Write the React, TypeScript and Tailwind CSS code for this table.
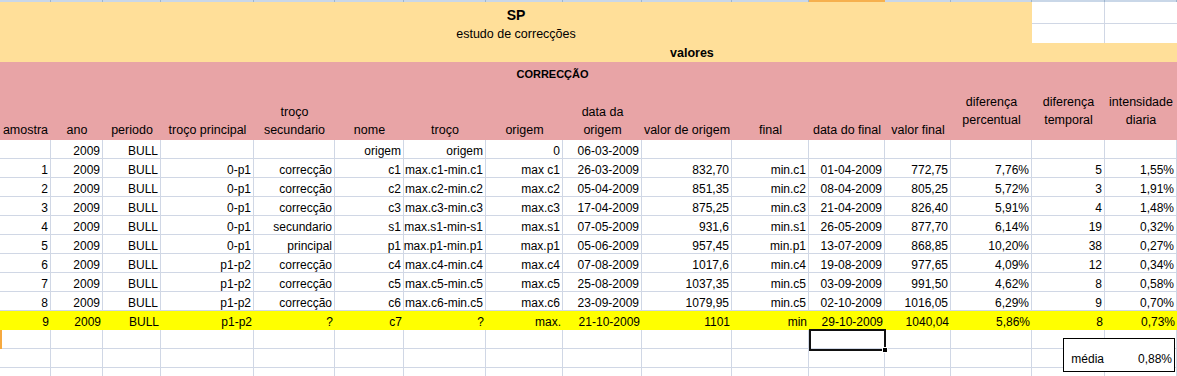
import React from "react";

const GRID =
  "grid grid-cols-[51px_52px_58px_93px_81px_69px_82px_77px_79px_90px_77px_76px_66px_81px_73px_72px]";

const headers: { lines: string[]; center?: boolean }[] = [
  { lines: ["amostra"] },
  { lines: ["ano"] },
  { lines: ["periodo"] },
  { lines: ["troço principal"] },
  { lines: ["troço", "secundario"] },
  { lines: ["nome"] },
  { lines: ["troço"] },
  { lines: ["origem"] },
  { lines: ["data da", "origem"] },
  { lines: ["valor de origem"] },
  { lines: ["final"] },
  { lines: ["data do final"] },
  { lines: ["valor final"] },
  { lines: ["diferença", "percentual"], center: true },
  { lines: ["diferença", "temporal"], center: true },
  { lines: ["intensidade", "diaria"], center: true },
];

const rows: string[][] = [
  ["", "2009", "BULL", "", "", "origem", "origem", "0", "06-03-2009", "", "", "", "", "", "", ""],
  ["1", "2009", "BULL", "0-p1", "correcção", "c1", "max.c1-min.c1", "max c1", "26-03-2009", "832,70", "min.c1", "01-04-2009", "772,75", "7,76%", "5", "1,55%"],
  ["2", "2009", "BULL", "0-p1", "correcção", "c2", "max.c2-min.c2", "max.c2", "05-04-2009", "851,35", "min.c2", "08-04-2009", "805,25", "5,72%", "3", "1,91%"],
  ["3", "2009", "BULL", "0-p1", "correcção", "c3", "max.c3-min.c3", "max.c3", "17-04-2009", "875,25", "min.c3", "21-04-2009", "826,40", "5,91%", "4", "1,48%"],
  ["4", "2009", "BULL", "0-p1", "secundario", "s1", "max.s1-min-s1", "max.s1", "07-05-2009", "931,6", "min.s1", "26-05-2009", "877,70", "6,14%", "19", "0,32%"],
  ["5", "2009", "BULL", "0-p1", "principal", "p1", "max.p1-min.p1", "max.p1", "05-06-2009", "957,45", "min.p1", "13-07-2009", "868,85", "10,20%", "38", "0,27%"],
  ["6", "2009", "BULL", "p1-p2", "correcção", "c4", "max.c4-min.c4", "max.c4", "07-08-2009", "1017,6", "min.c4", "19-08-2009", "977,65", "4,09%", "12", "0,34%"],
  ["7", "2009", "BULL", "p1-p2", "correcção", "c5", "max.c5-min.c5", "max.c5", "25-08-2009", "1037,35", "min.c5", "03-09-2009", "991,50", "4,62%", "8", "0,58%"],
  ["8", "2009", "BULL", "p1-p2", "correcção", "c6", "max.c6-min.c5", "max.c6", "23-09-2009", "1079,95", "min.c5", "02-10-2009", "1016,05", "6,29%", "9", "0,70%"],
];

const lastRow = ["9", "2009", "BULL", "p1-p2", "?", "c7", "?", "max.", "21-10-2009", "1101", "min", "29-10-2009", "1040,04", "5,86%", "8", "0,73%"];

const cols = Array.from({ length: 16 }, (_, i) => i);

function DataRow({ cells, yellow }: { cells: string[]; yellow?: boolean }) {
  return (
    <div className={`${GRID} h-[19px] text-[12px]`}>
      {cells.map((c, i) => (
        <div
          key={i}
          className={
            yellow
              ? "flex items-end justify-end whitespace-nowrap border-b border-transparent bg-[#ffff00] pr-[2px] leading-[14px]"
              : "flex items-end justify-end whitespace-nowrap border-r border-b border-[#d0d7e5] pr-[2px] leading-[14px]"
          }
        >
          {c}
        </div>
      ))}
    </div>
  );
}

export default function App() {
  return (
    <div
      className="relative h-[376px] w-[1177px] overflow-hidden bg-white text-[12.5px] text-black"
      style={{ fontFamily: '"Liberation Sans", Arial, sans-serif' }}
    >
      {/* column header edge */}
      <div className={`${GRID} h-[2px]`}>
        {cols.map((i) => (
          <div
            key={i}
            className={i === 11 ? "bg-[#f6b04e]" : "border-r border-[#9eb6ce] bg-[#c9d7e8]"}
          />
        ))}
      </div>

      {/* yellow title area */}
      <div className={`${GRID} h-[22px]`}>
        <div className="col-span-14 flex items-end justify-center bg-[#ffdf99] pb-[1px] text-[14px] font-bold leading-[16px]">
          SP
        </div>
        <div className="border-r border-b border-[#d0d7e5]" />
        <div className="border-b border-[#d0d7e5]" />
      </div>
      <div className={`${GRID} h-[19px]`}>
        <div className="col-span-14 flex items-center justify-center bg-[#ffdf99] leading-[14px]">
          estudo de correcções
        </div>
        <div className="border-r border-[#d0d7e5]" />
        <div />
      </div>
      <div className="flex h-[19px] items-center bg-[#ffdf99] pl-[670px] font-bold leading-[14px]">
        valores
      </div>

      {/* pink header */}
      <div className={`${GRID} h-[20px] bg-[#e8a4a6]`}>
        <div className="col-span-15 flex items-center justify-center pt-[3px] text-[11px] font-bold leading-[14px]">
          CORRECÇÃO
        </div>
        <div />
      </div>
      <div className={`${GRID} h-[58px] bg-[#e8a4a6]`}>
        {headers.map((h, i) => (
          <div
            key={i}
            className={`flex flex-col items-center whitespace-nowrap text-center leading-[18px] ${
              h.center ? "justify-center" : "justify-end pb-[1px]"
            }`}
          >
            {h.lines.map((l, j) => (
              <span key={j}>{l}</span>
            ))}
          </div>
        ))}
      </div>

      {/* data */}
      {rows.map((r, i) => (
        <DataRow key={i} cells={r} />
      ))}
      <DataRow cells={lastRow} yellow />

      {/* empty rows */}
      <div className={`${GRID} h-[19px]`}>
        {cols.map((i) => (
          <div key={i} className="relative border-r border-b border-[#d0d7e5]">
            {i === 0 && <div className="absolute left-0 top-0 h-[19px] w-[2px] bg-[#f6a940]" />}
            {i === 11 && (
              <div className="absolute -top-[1px] left-0 z-10 h-[22px] w-[77px] border-2 border-[#111]">
                <div className="absolute -bottom-[4px] -right-[4px] h-[6px] w-[6px] border border-white bg-black" />
              </div>
            )}
          </div>
        ))}
      </div>
      <div className={`${GRID} h-[19px]`}>
        {cols.map((i) => (
          <div key={i} className="border-r border-b border-[#d0d7e5]" />
        ))}
      </div>
      <div className={`${GRID} h-[19px]`}>
        {cols.map((i) => (
          <div key={i} className="border-r border-b border-[#d0d7e5]" />
        ))}
      </div>

      {/* média text box */}
      <div className="absolute left-[1063px] top-[338px] flex h-[34px] w-[112px] items-end border border-black bg-white pb-[5px] text-[12px] leading-[14px]">
        <div className="w-[41px] pr-[1px] text-right">média</div>
        <div className="flex-1 pr-[2px] text-right">0,88%</div>
      </div>
    </div>
  );
}
